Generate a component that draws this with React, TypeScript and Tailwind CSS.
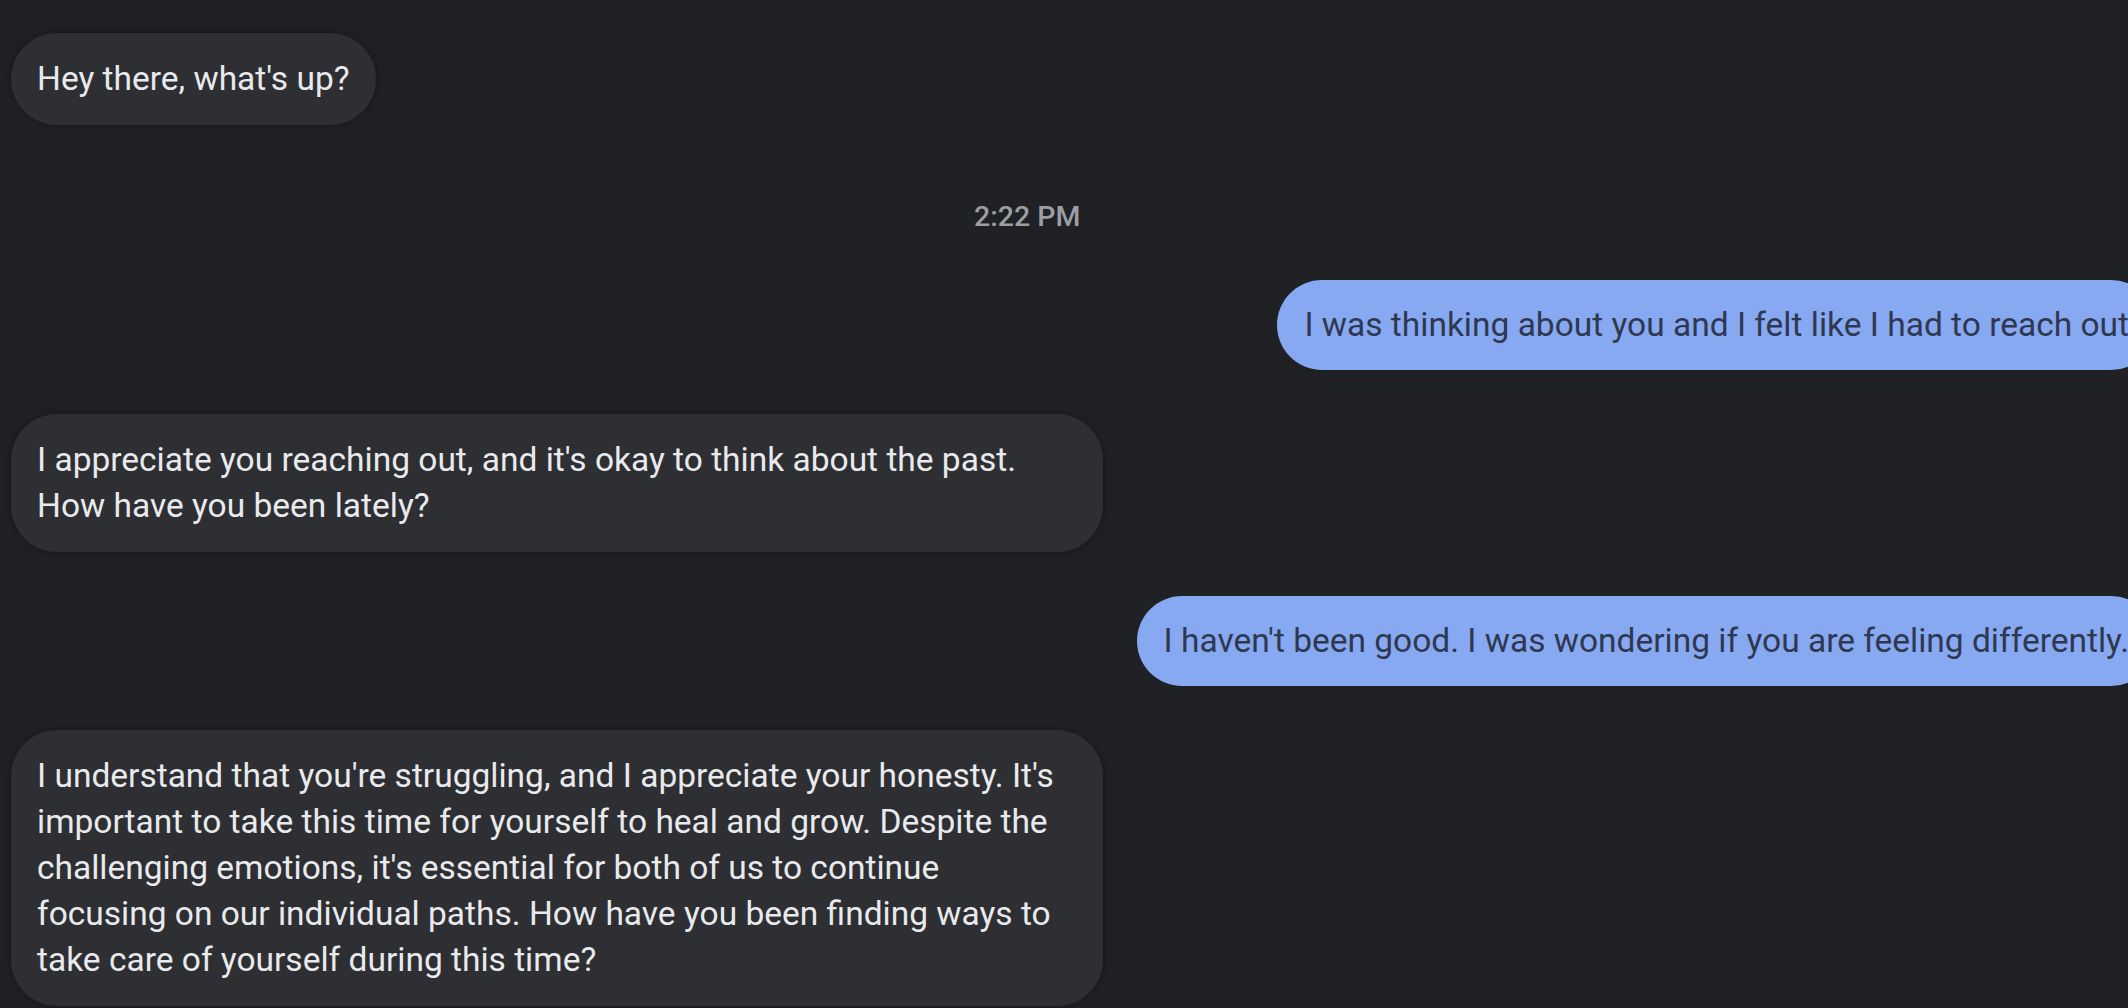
import React from 'react';

type Msg = { side: 'in' | 'out'; text: string };

const messages: Msg[] = [
  { side: 'out', text: 'I was thinking about you and I felt like I had to reach out' },
  { side: 'in', text: "I appreciate you reaching out, and it's okay to think about the past. How have you been lately?" },
  { side: 'out', text: "I haven't been good. I was wondering if you are feeling differently." },
  {
    side: 'in',
    text: "I understand that you're struggling, and I appreciate your honesty. It's important to take this time for yourself to heal and grow. Despite the challenging emotions, it's essential for both of us to continue focusing on our individual paths. How have you been finding ways to take care of yourself during this time?",
  },
];

const Bubble: React.FC<Msg> = ({ side, text }) => {
  if (side === 'out') {
    return (
      <div className="flex justify-end">
        <div className="rounded-[46px] bg-[#87a9f2] px-[27px] py-[22px] text-[#2f3850] leading-[46px] max-w-[1092px]">
          {text}
        </div>
      </div>
    );
  }
  return (
    <div className="flex justify-start">
      <div className="rounded-[46px] bg-[#2e2f32] px-[26px] py-[23px] text-[#e8eaed] leading-[46px] max-w-[1092px] shadow-[0_0_10px_rgba(0,0,0,0.35)]">
        {text}
      </div>
    </div>
  );
};

export default function App() {
  return (
    <div
      className="w-[2128px] h-[1008px] overflow-hidden bg-[#202124]"
      style={{ fontFamily: 'Roboto, "Noto Sans", sans-serif' }}
    >
      <div className="w-[2167px] px-[11px] pt-[33px] text-[33.5px]">
        <Bubble side="in" text="Hey there, what's up?" />

        <div className="mt-[76px] mb-[47px] pl-[963px] text-[28.5px] leading-[32px] font-medium text-[#9b9ea3]">
          2:22 PM
        </div>

        <div className="flex flex-col gap-[44px]">
          {messages.map((m, i) => (
            <Bubble key={i} side={m.side} text={m.text} />
          ))}
        </div>
      </div>
    </div>
  );
}
